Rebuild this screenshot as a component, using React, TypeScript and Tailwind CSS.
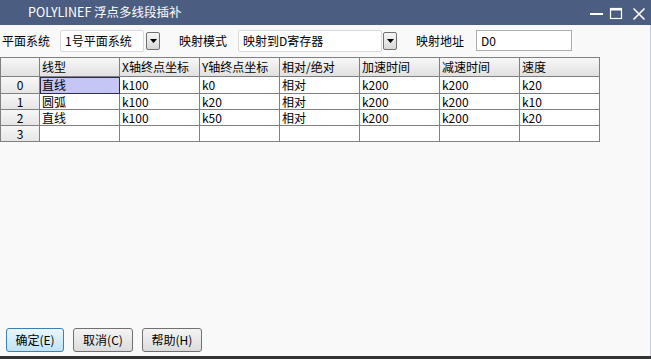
import React from "react";

const font = { fontFamily: '"Noto Sans CJK SC", "Noto Sans", sans-serif' };

const cols = ["线型", "X轴终点坐标", "Y轴终点坐标", "相对/绝对", "加速时间", "减速时间", "速度"];
const rows = [
  ["直线", "k100", "k0", "相对", "k200", "k200", "k20"],
  ["圆弧", "k100", "k20", "相对", "k200", "k200", "k10"],
  ["直线", "k100", "k50", "相对", "k200", "k200", "k20"],
  ["", "", "", "", "", "", ""],
];
const rowH = ["h-[17px]", "h-[16px]", "h-[16px]", "h-[16px]"];

function DropBtn() {
  return (
    <div className="flex h-[18px] w-[14px] items-center justify-center rounded-[2px] border border-[#707070] bg-gradient-to-b from-[#f6f6f6] to-[#d8d8d8]">
      <svg width="7" height="4" viewBox="0 0 7 4">
        <path d="M0 0H7L3.5 4Z" fill="#000" />
      </svg>
    </div>
  );
}

function Btn({ label, focused }: { label: string; focused?: boolean }) {
  return (
    <div
      className={
        "flex h-[24px] items-center justify-center rounded-[3px] border text-[12px] text-[#000] " +
        (focused
          ? "border-[#3c7fb1] bg-gradient-to-b from-[#eaf6fd] to-[#bfe3f7]"
          : "border-[#707070] bg-gradient-to-b from-[#f4f4f4] to-[#dcdcdc]")
      }
      style={{ width: focused ? 58 : 60 }}
    >
      {label}
    </div>
  );
}

export default function App() {
  return (
    <div className="flex h-[359px] w-[651px] flex-col overflow-hidden bg-[#f9f9f9]" style={font}>
      {/* Title bar */}
      <div className="flex h-[25px] shrink-0 items-center bg-[#4b5d80] text-white">
        <div className="pl-[28px] text-[12.5px] leading-none">POLYLINEF 浮点多线段插补</div>
        <div className="flex-1" />
        <svg width="66" height="20" viewBox="0 0 66 20">
          <rect x="5" y="10" width="13" height="2" fill="#fff" />
          <rect x="25.5" y="5.5" width="11" height="10" fill="none" stroke="#fff" strokeWidth="1.2" />
          <rect x="25" y="5" width="12" height="2.5" fill="#fff" />
          <path d="M48.5 5.5L59.5 16.5M59.5 5.5L48.5 16.5" stroke="#fff" strokeWidth="1.6" />
        </svg>
      </div>
      <div className="flex flex-1 flex-col border-r border-[#c8c8e0]">
        {/* Controls row */}
        <div className="flex h-[31px] shrink-0 items-center text-[12px] text-[#000]">
          <span className="ml-[2px] w-[58px]">平面系统</span>
          <div className="flex h-[22px] w-[84px] items-center rounded-[2px] border border-[#dadada] bg-white pl-[4px]">1号平面系统</div>
          <div className="ml-[2px]">
            <DropBtn />
          </div>
          <span className="ml-[19px] w-[59px]">映射模式</span>
          <div className="flex h-[22px] w-[144px] items-center rounded-[2px] border border-[#dadada] bg-white pl-[4px]">映射到D寄存器</div>
          <div className="ml-[1px]">
            <DropBtn />
          </div>
          <span className="ml-[19px] w-[60px]">映射地址</span>
          <div className="flex h-[21px] w-[96px] items-center border border-[#abadb3] bg-white pl-[4px]">D0</div>
        </div>
        {/* Grid */}
        <div className="mt-[1px] grid w-[600px] grid-cols-[39px_repeat(7,80px)] border-l border-t border-[#808080] text-[12px] leading-none text-[#000]">
          <div className="h-[19px] border-b border-r border-[#808080] bg-gradient-to-b from-[#f7f7f7] to-[#e1e1e1]" />
          {cols.map((c) => (
            <div
              key={c}
              className="flex h-[19px] items-center border-b border-r border-[#808080] bg-gradient-to-b from-[#f7f7f7] to-[#e1e1e1] pl-[2px]"
            >
              {c}
            </div>
          ))}
          {rows.map((r, i) => (
            <React.Fragment key={i}>
              <div
                className={
                  rowH[i] +
                  " flex items-center justify-center border-b border-r border-[#808080] bg-gradient-to-b from-[#f7f7f7] to-[#e6e6e6]"
                }
              >
                {i}
              </div>
              {r.map((v, j) => (
                <div
                  key={j}
                  className={
                    rowH[i] +
                    " flex items-center border-b border-r border-[#808080] pl-[2px] " +
                    (i === 0 && j === 0 ? "bg-[#c6c6f6] outline outline-1 -outline-offset-1 outline-[#2c2c4c]" : "bg-white")
                  }
                >
                  {v}
                </div>
              ))}
            </React.Fragment>
          ))}
        </div>
        <div className="flex-1" />
        {/* Buttons */}
        <div className="flex shrink-0 gap-[9px] pb-[4px] pl-[6px]">
          <Btn label="确定(E)" focused />
          <Btn label="取消(C)" />
          <Btn label="帮助(H)" />
        </div>
      </div>
      <div className="h-[3px] shrink-0 bg-[#333]" />
    </div>
  );
}
